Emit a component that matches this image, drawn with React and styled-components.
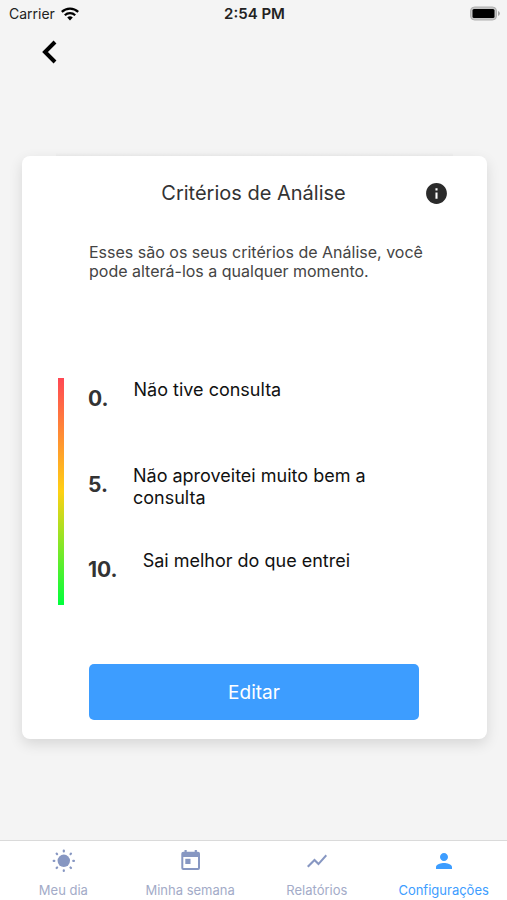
import React from 'react';
import styled, { createGlobalStyle } from 'styled-components';
import { MdInfo, MdPerson, MdShowChart } from 'react-icons/md';

const GlobalStyle = createGlobalStyle`
  * {
    box-sizing: border-box;
  }

  body {
    margin: 0;
    background: #f4f4f4;
    font-family: Inter, 'Liberation Sans', sans-serif;
  }

  h1,
  p,
  ol {
    margin: 0;
    padding: 0;
  }
`;

const Screen = styled.div`
  display: flex;
  flex-direction: column;
  min-height: 100vh;
`;

const StatusBar = styled.div`
  display: grid;
  grid-template-columns: 1fr auto 1fr;
  align-items: center;
  height: 27px;
  padding: 0 7px 0 9px;
  font-size: 14px;
  color: #222222;
`;

const Carrier = styled.div`
  display: flex;
  align-items: center;
  gap: 6px;
`;

const Clock = styled.time`
  font-size: 15px;
  font-weight: 600;
`;

const Battery = styled.svg`
  justify-self: end;
`;

const TopBar = styled.header`
  display: flex;
  align-items: center;
  height: 49px;
  padding: 0 36px;
`;

const IconButton = styled.button`
  display: flex;
  padding: 0;
  border: 0;
  background: none;
  color: ${({ $color }) => $color};
  cursor: pointer;
`;

const Content = styled.main`
  flex: 1;
  padding: 80px 20px 100px 22px;
`;

const Card = styled.section`
  position: relative;
  padding: 24px 38px 19px 36px;
  border-radius: 8px;
  background: #ffffff;
  box-shadow: 0 5px 14px rgba(0, 0, 0, 0.12);

  &::before {
    content: '';
    position: absolute;
    top: -3px;
    left: 34px;
    right: 34px;
    height: 3px;
    background: linear-gradient(#f0f0f0, #e6e6e6);
  }
`;

const CardHeader = styled.div`
  display: grid;
  grid-template-columns: 1fr auto 1fr;
  align-items: center;
  height: 26px;
`;

const Title = styled.h1`
  grid-column: 2;
  font-size: 20px;
  font-weight: 400;
  line-height: 26px;
  color: #333333;
`;

const InfoButton = styled(IconButton)`
  justify-self: end;
`;

const Description = styled.p`
  margin: 37px 12px 0 31px;
  font-size: 16px;
  line-height: 19px;
  color: #444444;
`;

const Scale = styled.div`
  display: flex;
  gap: 24px;
  margin-top: 97px;
`;

const ScaleBar = styled.div`
  width: 6px;
  background: linear-gradient(#ff4854, #ffd014 50%, #00ff3c);
`;

const Criteria = styled.ol`
  flex: 1;
  display: grid;
  grid-template-rows: 86px 85px 55px;
  padding-top: 1px;
  list-style: none;
`;

const Criterion = styled.li`
  display: flex;
  gap: 25px;
`;

const Score = styled.span`
  padding-top: 6px;
  font-size: 21px;
  font-weight: 700;
  line-height: 28px;
  color: #333333;
`;

const Label = styled.span`
  max-width: 250px;
  font-size: 18px;
  line-height: 22px;
  color: #111111;
`;

const EditButton = styled.button`
  display: block;
  width: calc(100% - 61px);
  height: 56px;
  margin: 59px 30px 0 31px;
  border: 0;
  border-radius: 5px;
  background: #3d9dff;
  font-family: inherit;
  font-size: 19px;
  color: #ffffff;
  cursor: pointer;
`;

const TabBar = styled.nav`
  display: grid;
  grid-template-columns: repeat(4, 1fr);
  height: 60px;
  border-top: 1px solid #dadada;
  background: #ffffff;
`;

const Tab = styled.a`
  display: flex;
  flex-direction: column;
  align-items: center;
  gap: 9px;
  padding-top: 8px;
  font-size: 13px;
  line-height: 16px;
  color: ${({ $active }) => ($active ? '#3d9dff' : '#a3abc8')};
  text-decoration: none;

  svg {
    color: ${({ $active }) => ($active ? '#3d9dff' : '#8797c2')};
  }
`;

const WifiIcon = () => (
  <svg width="18" height="14" viewBox="0 0 18 14" aria-hidden="true">
    <g fill="none" stroke="#000000" strokeWidth="2.2">
      <path d="M0.8 4.9a11.8 11.8 0 0 1 16.4 0" />
      <path d="M3.8 8.2a7.4 7.4 0 0 1 10.4 0" />
    </g>
    <path fill="#000000" d="M9 13.4 6.2 10.4a4.2 4.2 0 0 1 5.6 0z" />
  </svg>
);

const BatteryIcon = () => (
  <Battery width="31" height="15" viewBox="0 0 31 15" aria-hidden="true">
    <rect x="1.5" y="1" width="26" height="13" rx="4" fill="#c4c4c4" stroke="#b0b0b0" />
    <rect x="3.5" y="3" width="22" height="9" rx="1.5" fill="#000000" />
    <path d="M29 5a2.6 2.6 0 0 1 0 5z" fill="#a6a6a6" />
  </Battery>
);

const BackIcon = () => (
  <svg width="26" height="26" viewBox="0 0 26 26" aria-hidden="true">
    <path
      d="M19 3 9 13l10 10"
      fill="none"
      stroke="currentColor"
      strokeWidth="4"
    />
  </svg>
);

const rays = [0, 45, 90, 135, 180, 225, 270, 315];

const SunIcon = () => (
  <svg width="24" height="24" viewBox="0 0 24 24" fill="currentColor" aria-hidden="true">
    <circle cx="12.8" cy="11.8" r="6.2" />
    {rays.map((angle) => (
      <rect
        key={angle}
        x="11.7"
        y="0.6"
        width="2.2"
        height="2.8"
        rx="1"
        transform={`rotate(${angle} 12.8 11.8)`}
      />
    ))}
  </svg>
);

const CalendarIcon = () => (
  <svg width="24" height="24" viewBox="0 0 24 24" fill="currentColor" aria-hidden="true">
    <path
      fillRule="evenodd"
      d="M5.3 2.8H6.5V1H8.7V2.8H16.7V1H18.9V2.8H20a2 2 0 0 1 2 2V19a2 2 0 0 1-2 2H5.3a2 2 0 0 1-2-2V4.8a2 2 0 0 1 2-2zM5.3 8V19H20V8z"
    />
    <rect x="7.3" y="9.8" width="5.2" height="5.2" />
  </svg>
);

const criteria = [
  { score: 0, label: 'Não tive consulta' },
  { score: 5, label: 'Não aproveitei muito bem a consulta' },
  { score: 10, label: 'Sai melhor do que entrei' },
];

const tabs = [
  { label: 'Meu dia', icon: <SunIcon /> },
  { label: 'Minha semana', icon: <CalendarIcon /> },
  { label: 'Relatórios', icon: <MdShowChart size={24} /> },
  { label: 'Configurações', icon: <MdPerson size={24} />, active: true },
];

const App = () => (
  <Screen>
    <GlobalStyle />
    <StatusBar>
      <Carrier>
        Carrier
        <WifiIcon />
      </Carrier>
      <Clock>2:54 PM</Clock>
      <BatteryIcon />
    </StatusBar>
    <TopBar>
      <IconButton type="button" aria-label="Voltar" $color="#000000">
        <BackIcon />
      </IconButton>
    </TopBar>
    <Content>
      <Card>
        <CardHeader>
          <Title>Critérios de Análise</Title>
          <InfoButton type="button" aria-label="Informações" $color="#2b2b2b">
            <MdInfo size={25} />
          </InfoButton>
        </CardHeader>
        <Description>
          Esses são os seus critérios de Análise, você pode alterá-los a
          qualquer momento.
        </Description>
        <Scale>
          <ScaleBar />
          <Criteria>
            {criteria.map(({ score, label }) => (
              <Criterion key={score}>
                <Score>{score}.</Score>
                <Label>{label}</Label>
              </Criterion>
            ))}
          </Criteria>
        </Scale>
        <EditButton type="button">Editar</EditButton>
      </Card>
    </Content>
    <TabBar>
      {tabs.map(({ label, icon, active }) => (
        <Tab
          key={label}
          href="#"
          $active={active}
          aria-current={active ? 'page' : undefined}
        >
          {icon}
          {label}
        </Tab>
      ))}
    </TabBar>
  </Screen>
);

export default App;
